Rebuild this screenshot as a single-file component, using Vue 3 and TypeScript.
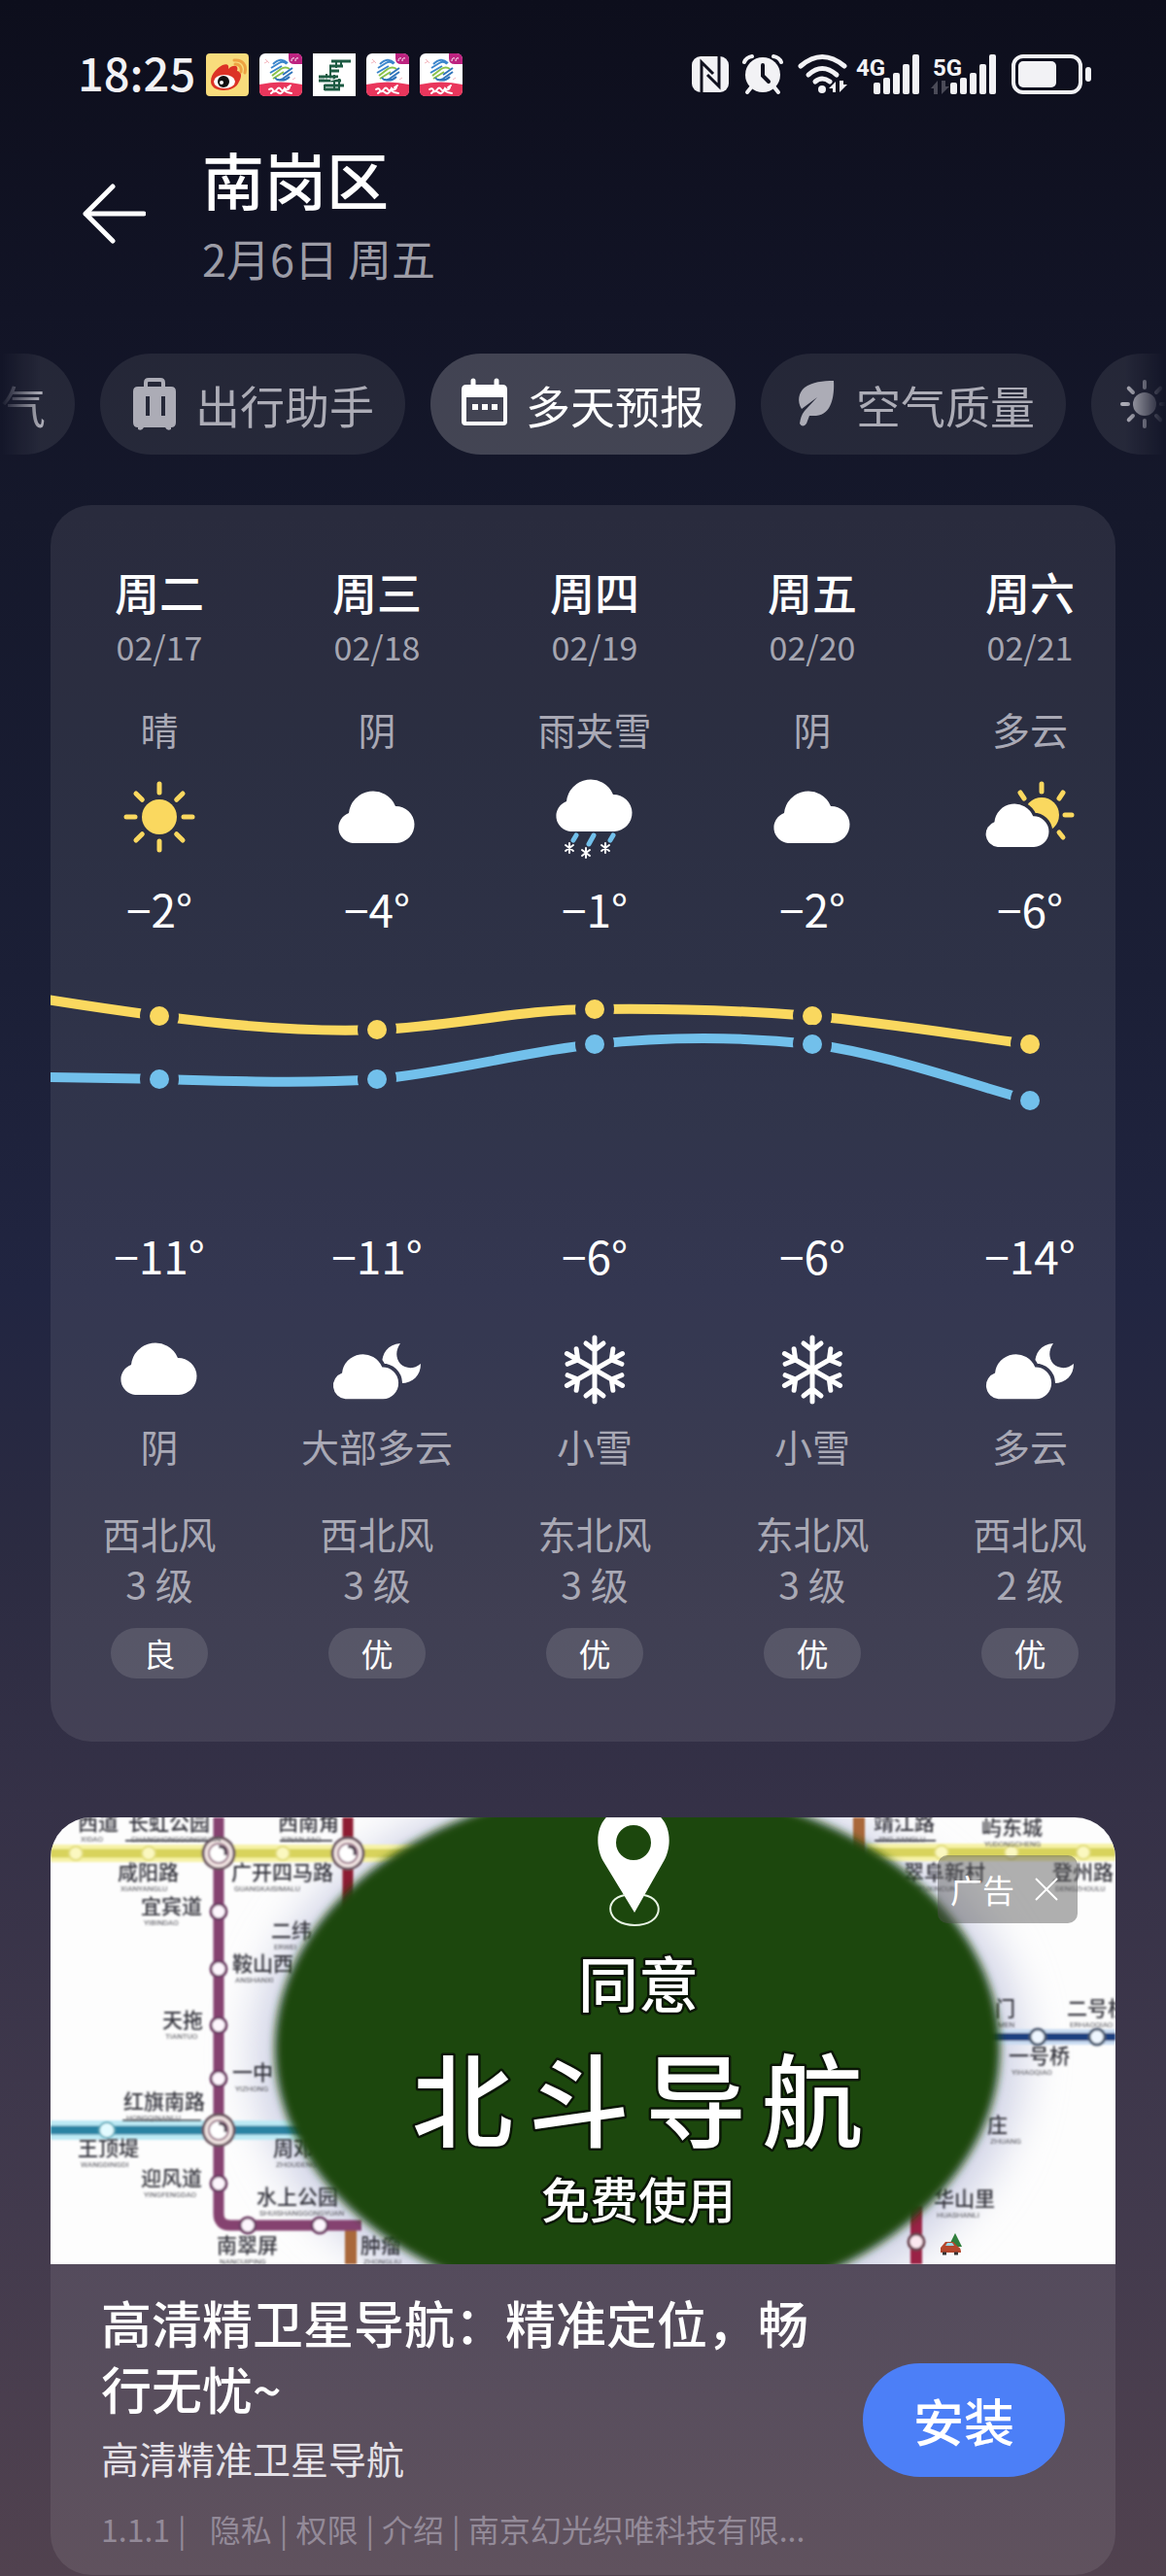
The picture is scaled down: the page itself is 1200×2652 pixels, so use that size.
<script setup lang="ts">
type Weather = 'sun' | 'cloud' | 'sleet' | 'partly' | 'night' | 'snow'

interface Day {
  week: string
  date: string
  day: string
  dayIcon: Weather
  high: string
  low: string
  nightIcon: Weather
  night: string
  wind: string
  level: string
  air: string
}

const days: Day[] = [
  { week: '周二', date: '02/17', day: '晴', dayIcon: 'sun', high: '−2°', low: '−11°', nightIcon: 'cloud', night: '阴', wind: '西北风', level: '3 级', air: '良' },
  { week: '周三', date: '02/18', day: '阴', dayIcon: 'cloud', high: '−4°', low: '−11°', nightIcon: 'night', night: '大部多云', wind: '西北风', level: '3 级', air: '优' },
  { week: '周四', date: '02/19', day: '雨夹雪', dayIcon: 'sleet', high: '−1°', low: '−6°', nightIcon: 'snow', night: '小雪', wind: '东北风', level: '3 级', air: '优' },
  { week: '周五', date: '02/20', day: '阴', dayIcon: 'cloud', high: '−2°', low: '−6°', nightIcon: 'snow', night: '小雪', wind: '东北风', level: '3 级', air: '优' },
  { week: '周六', date: '02/21', day: '多云', dayIcon: 'partly', high: '−6°', low: '−14°', nightIcon: 'night', night: '多云', wind: '西北风', level: '2 级', air: '优' },
]

// Chart points: one per day column, 224 apart
const highs = [81, 95, 74, 81, 110].map((y, i) => ({ x: 112 + i * 224, y }))
const lows = [146, 146, 110, 110, 168].map((y, i) => ({ x: 112 + i * 224, y }))

const cloud = 'M25 77A16 16 0 0 1 21 46A25 25 0 0 1 69 39A19 19 0 0 1 70 77Z'
const octants = [0, 45, 90, 135, 180, 225, 270, 315]
const sextants = [0, 60, 120, 180, 240, 300]

// Metro map behind the advertisement: label, pinyin, left x, centre y
const stations: [string, string, number, number][] = [
  ['西道', 'XIDAO', 28, 6], ['长虹公园', 'CHANGHONGGONGYUAN', 80, 6], ['西南角', 'XINANJIAO', 234, 6],
  ['咸阳路', 'XIANYANGLU', 69, 57], ['广开四马路', 'GUANGKAISIMALU', 186, 57], ['宜宾道', 'YIBINDAO', 93, 92],
  ['二纬', 'ERWEI', 227, 117], ['鞍山西', 'ANSHANXI', 187, 151], ['天拖', 'TIANTUO', 115, 209],
  ['一中', 'YIZHONG', 187, 263], ['红旗南路', 'HONGQINANLU', 75, 293], ['王顶堤', 'WANGDINGDI', 28, 341],
  ['周邓', 'ZHOUDENG', 229, 341], ['迎风道', 'YINGFENGDAO', 93, 372], ['水上公园', 'SHUISHANGGONGYUAN', 212, 391],
  ['南翠屏', 'NANCUIPING', 171, 441], ['肿瘤', 'ZHONGLIU', 319, 441], ['靖江路', 'JINGJIANGLU', 847, 6],
  ['屿东城', 'YUDONGCHENG', 958, 11], ['翠阜新村', 'CUIFUXINCUN', 878, 57], ['登州路', 'DENGZHOULU', 1031, 57],
  ['门', 'MEN', 972, 197], ['二号桥', 'ERHAOQIAO', 1046, 197], ['一号桥', 'YIHAOQIAO', 986, 246],
  ['庄', 'ZHUANG', 964, 317], ['华山里', 'HUASHANLI', 909, 393],
]
const purpleStops = [[173, 97], [173, 156], [173, 214], [173, 269], [173, 377], [203, 420], [277, 420]]
const yellowStops = [[26, 37], [101, 37], [239, 37], [917, 36], [989, 36], [1063, 36]]
const interchanges = [[173, 37], [306, 37], [173, 322]]
const signals = ['4G', '5G']
const apps = ['weibo', 'mobile', 'post', 'mobile', 'mobile']
</script>

<template>
  <main class="screen">
    <div class="status">
      <div class="status-left">
        <time class="clock">18:25</time>
        <svg v-for="(app, i) in apps" :key="i" class="app" viewBox="0 0 44 44" aria-hidden="true">
          <template v-if="app === 'weibo'">
            <rect width="44" height="44" rx="4" fill="#f8dc7c" />
            <path d="M5 29C5 20 13 14 17 12c5-2 7 0 6 4 5-5 11-4 9 2 5 1 5 6 2 11-2 6-9 9-16 9C10 38 5 34 5 29z" fill="#dc3226" />
            <ellipse cx="19" cy="29" rx="11" ry="7" fill="#fff" />
            <circle cx="18" cy="29" r="6" fill="#111" />
            <circle cx="16" cy="30" r="2" fill="#fff" />
            <path d="M30 11c5 0 7 4 6 8M29 7c9-1 13 6 11 13" fill="none" stroke="#eea343" stroke-width="3" stroke-linecap="round" />
          </template>
          <template v-else-if="app === 'mobile'">
            <rect width="44" height="44" rx="6" fill="#fff" />
            <path d="M30 0h8q6 0 6 6v5H36q-6 0-6-6z" fill="#bd2380" />
            <path d="M0 32q22-5 44 0v6q0 6-6 6H6q-6 0-6-6z" fill="#e9365c" />
            <path d="M14 11q8-8 15-1M12 15l8-5q5-3 8 1M11 20l12-7" fill="none" stroke="#3b86cc" stroke-width="2" />
            <path d="M13 23l9-7q5-3 9 0M14 26l11-7" fill="none" stroke="#8bc34a" stroke-width="2" />
            <path d="M34 15l-10 7M34 19l-10 7q-5 3-8-1M31 24q-5 5-12 3" fill="none" stroke="#2e74ba" stroke-width="2" />
            <path d="M10 37q3-2 4 1t4-1q2-3 4 0t4-1q3 3 5-1M12 41q4-4 7-1t6-2q4 3 8 3M29 35l3-2" fill="none" stroke="#fff" stroke-width="2" stroke-linecap="round" />
            <path d="M33 8q0-4 3-3M37 8q0-4 3-3" fill="none" stroke="#fff" stroke-width="1" />
            <path d="M5 10l4-2M6 6l4 4M34 27l3-2" stroke="#f4b7bf" stroke-width="1" />
          </template>
          <template v-else>
            <rect width="44" height="44" fill="#fff" />
            <path d="M19 8h20M17 13h14M17 18h10M6 24h20M6 28h23M12 33h20M12 37h16" stroke="#1d5b43" stroke-width="3" />
            <path d="M18 12v14M24 7v8M12 32v6M14 21v8M22 22v14M27 26v11M29 14v-5" stroke="#1d5b43" stroke-width="2" />
            <path d="M12 26h8M18 28l10-3" stroke="#fff" stroke-width="1" />
          </template>
        </svg>
      </div>
      <div class="status-right">
        <svg width="38" height="44" viewBox="0 0 38 44" aria-hidden="true">
          <rect y="3" width="38" height="37" rx="9" fill="#f2f2f5" />
          <path d="M10 41V9L22 21" fill="none" stroke="#10111f" stroke-width="3" />
          <path d="M28 2V34L16 22" fill="none" stroke="#10111f" stroke-width="3" />
        </svg>
        <svg class="alarm" width="42" height="44" viewBox="0 0 42 44" aria-hidden="true">
          <g fill="none" stroke="#f2f2f5" stroke-linecap="round">
            <path d="M2 9q2-5 8-6M40 9q-2-5-8-6" stroke-width="4" />
            <path d="M9 35l-4 5M33 35l4 5" stroke-width="4" />
          </g>
          <circle cx="21" cy="22" r="18" fill="#f2f2f5" />
          <path d="M21 12v11l6 6" fill="none" stroke="#10111f" stroke-width="4" stroke-linecap="round" />
        </svg>
        <svg class="wifi" width="54" height="44" viewBox="0 0 54 44" aria-hidden="true">
          <g fill="none" stroke="#f2f2f5" stroke-width="5" stroke-linecap="round">
            <path d="M4 13Q26-6 49 13" />
            <path d="M12 22Q26 9 41 22" />
            <path d="M19 29Q26 23 34 29" />
          </g>
          <circle cx="26" cy="37" r="4" fill="#f2f2f5" />
          <path d="M40 40V29l-7 7h4v4zM44 28v12l8-8h-4v-4z" fill="#f2f2f5" />
        </svg>
        <svg v-for="name in signals" :key="name" class="signal" width="68" height="44" viewBox="0 0 68 44">
          <text x="2" y="23" class="net">{{ name }}</text>
          <g fill="#f2f2f5">
            <rect x="20" y="30" width="7" height="12" rx="2" />
            <rect x="30" y="25" width="7" height="17" rx="2" />
            <rect x="40" y="20" width="7" height="22" rx="2" />
            <rect x="50" y="11" width="7" height="31" rx="2" />
            <rect x="60" y="1" width="7" height="41" rx="2" />
          </g>
          <path v-if="name === '5G'" d="M7 42V28l-7 8h3v6zM11 28v14l8-8h-4v-6z" fill="#4a4a57" />
        </svg>
        <svg class="battery" width="84" height="44" viewBox="0 0 84 44" aria-hidden="true">
          <rect x="3" y="3" width="69" height="37" rx="10" fill="none" stroke="#f2f2f5" stroke-width="4" />
          <rect x="8" y="8" width="39" height="27" rx="5" fill="#f2f2f5" />
          <rect x="77" y="14" width="6" height="15" rx="3" fill="#f2f2f5" />
        </svg>
      </div>
    </div>

    <header class="header">
      <button class="back" type="button" aria-label="返回">
        <svg width="66" height="64" viewBox="0 0 66 64" aria-hidden="true">
          <path d="M32 4L4 32l28 28M4 32h60" fill="none" stroke="#fff" stroke-width="5" stroke-linecap="round" stroke-linejoin="round" />
        </svg>
      </button>
      <div>
        <h1>南岗区</h1>
        <p class="today">2月6日 周五</p>
      </div>
    </header>

    <nav class="tabs">
      <button class="tab tail" type="button">气</button>
      <button class="tab" type="button">
        <svg viewBox="0 0 50 54" aria-hidden="true">
          <path d="M17 10V5q0-3 3-3h12q3 0 3 3v5" fill="none" stroke="currentColor" stroke-width="4" />
          <path fill-rule="evenodd" fill="currentColor" d="M9 9h34q5 0 5 5v32q0 5-5 5v2q-4 2-6-2H15q-2 4-6 2v-2q-5 0-5-5V14q0-5 5-5zM17 19v20h4V19zM33 19v20h4V19z" />
        </svg>
        <span>出行助手</span>
      </button>
      <button class="tab active" type="button">
        <svg viewBox="0 0 50 54" aria-hidden="true">
          <path d="M14 3v7M38 3v7" stroke="currentColor" stroke-width="5" stroke-linecap="round" />
          <path fill-rule="evenodd" fill="currentColor" d="M7 7h37q5 0 5 5v33q0 4-4 4H6q-4 0-4-4V12q0-5 5-5zM7 20v25h38V20z" />
          <path d="M13 27h6v6h-6zM23 27h6v6h-6zM33 27h6v6h-6z" fill="currentColor" />
        </svg>
        <span>多天预报</span>
      </button>
      <button class="tab" type="button">
        <svg viewBox="0 0 50 54" aria-hidden="true">
          <path d="M45 3C46 18 43 38 27 39H20L17 47Q13 52 10 47Q11 39 15 34L28 20 12 32C7 24 9 15 15 10 23 4 34 3 45 3z" fill="currentColor" />
        </svg>
        <span>空气质量</span>
      </button>
      <button class="tab" type="button" aria-label="日出">
        <svg viewBox="0 0 50 54" aria-hidden="true">
          <circle cx="25" cy="27" r="12" fill="currentColor" />
          <path v-for="a in octants" :key="a" d="M25 4v6" :transform="`rotate(${a} 25 27)`" stroke="currentColor" stroke-width="4" stroke-linecap="round" />
        </svg>
      </button>
    </nav>

    <section class="card forecast">
      <svg class="defs" width="0" height="0" aria-hidden="true">
        <defs>
          <mask id="behind-day" maskUnits="userSpaceOnUse" x="0" y="0" width="100" height="100">
            <rect width="100" height="100" fill="#fff" />
            <path :d="cloud" transform="translate(-4 17) scale(0.83)" stroke="#000" stroke-width="9" />
          </mask>
          <mask id="behind-night" maskUnits="userSpaceOnUse" x="0" y="0" width="100" height="100">
            <rect width="100" height="100" fill="#fff" />
            <path :d="cloud" transform="translate(-4 15) scale(0.86)" stroke="#000" stroke-width="9" />
          </mask>
          <symbol id="w-sun" viewBox="0 0 100 100">
            <circle cx="50" cy="50" r="18" fill="#fad85f" />
            <path v-for="a in octants" :key="a" d="M50 16v9" :transform="`rotate(${a} 50 50)`" stroke="#fad85f" stroke-width="5" stroke-linecap="round" />
          </symbol>
          <symbol id="w-cloud" viewBox="0 0 100 100"><path :d="cloud" fill="#fff" /></symbol>
          <symbol id="w-sleet" viewBox="0 0 100 100">
            <path :d="cloud" transform="translate(0 -12)" fill="#fff" />
            <path d="M31 69l-3 5M49 69l-5 9M69 69l-3 5" stroke="#72c0eb" stroke-width="5" stroke-linecap="round" />
            <path d="M24 77v10M20 79l8 6M28 79l-8 6M41 82v10M37 84l8 6M45 84l-8 6M61 77v10M57 79l8 6M65 79l-8 6" stroke="#fff" stroke-width="2" stroke-linecap="round" />
          </symbol>
          <symbol id="w-partly" viewBox="0 0 100 100">
            <circle cx="62" cy="48" r="18" fill="#fad85f" mask="url(#behind-day)" />
            <path d="M62 16v8M84 25l-4 6M40 25l4 6M86 48h7M80 66l4 5" stroke="#fad85f" stroke-width="5" stroke-linecap="round" />
            <path :d="cloud" transform="translate(-4 17) scale(0.83)" fill="#fff" />
          </symbol>
          <symbol id="w-night" viewBox="0 0 100 100">
            <path d="M74 24C61 25 55 34 55 46C55 57 64 65 75 65C87 65 95 57 95 45C88 51 79 50 74 45C69 39 69 31 74 24Z" fill="#fff" mask="url(#behind-night)" />
            <path :d="cloud" transform="translate(-4 15) scale(0.86)" fill="#fff" />
          </symbol>
          <symbol id="w-snow" viewBox="0 0 100 100">
            <path v-for="a in sextants" :key="a" d="M50 51V18M41 24l9 7 9-7" :transform="`rotate(${a} 50 51)`" fill="none" stroke="#fff" stroke-width="5" stroke-linecap="round" />
          </symbol>
        </defs>
      </svg>

      <div class="days">
        <div v-for="d in days" :key="d.date" class="day">
          <h2>{{ d.week }}</h2>
          <span class="date">{{ d.date }}</span>
          <span class="sky">{{ d.day }}</span>
          <svg class="weather" aria-hidden="true"><use :href="`#w-${d.dayIcon}`" /></svg>
          <span class="temp">{{ d.high }}</span>
        </div>
      </div>

      <svg class="chart" width="1120" height="297" viewBox="0 0 1120 297" aria-hidden="true">
        <defs>
          <mask id="halos" maskUnits="userSpaceOnUse" x="0" y="0" width="1120" height="297">
            <rect width="1120" height="297" fill="#fff" />
            <circle v-for="p in [...highs, ...lows]" :key="`${p.x}-${p.y}`" :cx="p.x" :cy="p.y" r="20" fill="#000" />
          </mask>
          <mask id="low-halos" maskUnits="userSpaceOnUse" x="0" y="0" width="1120" height="297">
            <rect width="1120" height="297" fill="#fff" />
            <circle v-for="p in lows" :key="p.x" :cx="p.x" :cy="p.y" r="20" fill="#000" />
          </mask>
        </defs>
        <g fill="none" stroke-width="10" mask="url(#halos)">
          <path d="M-4 64C40 71 75 76 112 81C187 91 261 98 336 95C411 92 485 74 560 74C635 73 709 75 784 81C859 88 933 100 1008 110" stroke="#fad85f" />
          <path d="M-4 144C40 145 75 145 112 146C187 148 261 151 336 146C411 139 485 118 560 110C635 102 709 102 784 110C859 120 933 147 1008 168" stroke="#72c0eb" />
        </g>
        <g fill="#fad85f" mask="url(#low-halos)">
          <circle v-for="p in highs" :key="p.x" :cx="p.x" :cy="p.y" r="10" />
        </g>
        <circle v-for="p in lows" :key="p.x" :cx="p.x" :cy="p.y" r="10" fill="#72c0eb" />
      </svg>

      <div class="days">
        <div v-for="d in days" :key="d.date" class="day night">
          <span class="temp">{{ d.low }}</span>
          <svg class="weather" aria-hidden="true"><use :href="`#w-${d.nightIcon}`" /></svg>
          <span class="sky">{{ d.night }}</span>
          <span class="wind">{{ d.wind }}</span>
          <span class="level">{{ d.level }}</span>
          <span class="air">{{ d.air }}</span>
        </div>
      </div>
    </section>

    <article class="card ad">
      <div class="banner">
        <svg class="map" viewBox="0 0 1096 460" preserveAspectRatio="xMidYMid slice">
          <defs>
            <filter id="soft"><feGaussianBlur stdDeviation="1" /></filter>
            <filter id="edge" x="-20%" y="-20%" width="140%" height="140%"><feGaussianBlur stdDeviation="4" /></filter>
            <filter id="shade" x="-20%" y="-20%" width="140%" height="140%"><feGaussianBlur stdDeviation="22" /></filter>
          </defs>
          <rect width="1096" height="460" fill="#fdfdfd" />
          <ellipse cx="605" cy="245" rx="396" ry="290" fill="#d0d3e6" filter="url(#shade)" />
          <g filter="url(#soft)" fill="none">
            <path d="M0 37H400M840 36H1096" stroke="#f7f3a8" stroke-width="18" />
            <path d="M0 37H400M840 36H1096" stroke="#d8d35c" stroke-width="9" />
            <path d="M0 322H290" stroke="#bdeaf5" stroke-width="20" />
            <path d="M0 322H290" stroke="#2b83a3" stroke-width="9" />
            <path d="M960 226H1096" stroke="#c9dcf2" stroke-width="16" />
            <path d="M960 226H1096" stroke="#1d4180" stroke-width="8" />
            <path d="M306 0V100" stroke="#8d1f31" stroke-width="11" />
            <path d="M832 0V40M309 415V460" stroke="#a9683a" stroke-width="12" />
            <path d="M891 400V460" stroke="#9a2444" stroke-width="12" />
            <path d="M173 0V408Q173 420 185 420H320" stroke="#854270" stroke-width="11" />
            <circle v-for="[x, y] in yellowStops" :key="x" :cx="x" :cy="y" r="7" fill="#fbf8c0" stroke="#e2dd7c" stroke-width="2" />
            <circle v-for="[x, y] in purpleStops" :key="`${x}-${y}`" :cx="x" :cy="y" r="8" fill="#fdf5fd" stroke="#6f3f66" stroke-width="3" />
            <circle cx="58" cy="322" r="8" fill="#e4fbff" stroke="#5ea8b8" stroke-width="2" />
            <circle cx="1016" cy="226" r="8" fill="#eef6ff" stroke="#4c5a70" stroke-width="3" />
            <circle cx="1077" cy="226" r="8" fill="#eef6ff" stroke="#4c5a70" stroke-width="3" />
            <circle cx="891" cy="437" r="8" fill="#fbe8ef" stroke="#6b4350" stroke-width="3" />
            <g v-for="[x, y] in interchanges" :key="`${x}-${y}`">
              <circle :cx="x" :cy="y" r="16" fill="#f3e6e4" stroke="#6a5560" stroke-width="3" />
              <circle :cx="x" :cy="y" r="10" fill="#fff" stroke="#a07f90" stroke-width="2" />
              <path :d="`M${x} ${y - 7}q9 0 7 9`" stroke="#4b3a4c" stroke-width="3" />
            </g>
            <path d="M77 24H162M236 24H290M74 312H155M848 24H911" stroke="#55555c" stroke-width="2" />
          </g>
          <g filter="url(#soft)">
            <g v-for="[label, pinyin, x, y] in stations" :key="label">
              <text class="stop" :x="x" :y="y + 7">{{ label }}</text>
              <text class="pinyin" :x="x + 3" :y="y + 19">{{ pinyin }}</text>
            </g>
          </g>
          <ellipse cx="604" cy="238" rx="373" ry="270" fill="#1e4610" filter="url(#edge)" />
          <path fill-rule="evenodd" fill="#fff" d="M601 98L570 47C560 31 562 11 571 1C584-14 616-14 629 1C638 11 640 31 630 47ZM600 8A18 18 0 1 0 600 44A18 18 0 1 0 600 8Z" />
          <path d="M591 80C568 84 572 111 601 111C631 111 633 84 611 80" fill="none" stroke="#e8f5e4" stroke-width="2" />
          <g class="slogan">
            <text x="605" y="196" text-anchor="middle" font-size="62">同意</text>
            <text x="372 492 612 732" y="332" font-size="104">北斗导航</text>
            <text x="605" y="413" text-anchor="middle" font-size="50">免费使用</text>
          </g>
          <path d="M931 428l7 14h-14z" fill="#2f7d3c" />
          <path d="M916 443l5-6h8l5 5q3 1 3 6h-21z" fill="#b4472e" />
          <path d="M921 441l2-3h5l2 3z" fill="#9ad8e6" />
          <path d="M918 449h4M930 449h4" stroke="#343434" stroke-width="3" />
        </svg>
        <div class="tag">
          <span>广告</span>
          <button type="button" aria-label="关闭">
            <svg width="24" height="24" viewBox="0 0 24 24" aria-hidden="true"><path d="M1 1l22 22M23 1L1 23" stroke="#fff" stroke-width="2" /></svg>
          </button>
        </div>
      </div>
      <div class="info">
        <div class="copy">
          <h3>高清精卫星导航：精准定位，畅行无忧~</h3>
          <p class="summary">高清精准卫星导航</p>
          <p class="meta">
            <span>1.1.1</span><span class="first">|</span><a href="#">隐私</a><span>|</span><a href="#">权限</a><span>|</span><a href="#">介绍</a><span>|</span><span>南京幻光织唯科技有限...</span>
          </p>
        </div>
        <button class="install" type="button">安装</button>
      </div>
    </article>
  </main>
</template>

<style>
body {
  margin: 0;
  background: #53434f;
}
</style>

<style scoped>
.screen {
  box-sizing: border-box;
  overflow: hidden;
  padding: 55px 0 1px;
  color: #fff;
  font-family: "Noto Sans CJK SC", "Noto Sans", sans-serif;
  background: linear-gradient(#0d0e1c 0%, #121426 12%, #15182b 20%, #1b1f36 38%, #212541 50%, #2b2b41 60%, #353147 70%, #423a4d 86%, #51424f 100%);
}
h1, h2, h3, p {
  margin: 0;
  font-weight: 500;
}
button {
  padding: 0;
  border: 0;
  background: none;
  color: inherit;
  font: inherit;
}
svg {
  display: block;
  flex: none;
}
.status {
  display: flex;
  justify-content: space-between;
  height: 44px;
  padding: 0 76px 0 80px;
}
.status-left, .status-right {
  display: flex;
  align-items: flex-start;
}
.status-left {
  gap: 11px;
}
.clock {
  color: #f2f2f5;
  font-size: 47px;
  font-weight: 500;
  line-height: 38px;
}
.app {
  width: 44px;
  height: 44px;
}
.alarm, .battery, .wifi {
  margin-left: 14px;
}
.signal {
  margin-left: 5px;
}
.signal + .signal {
  margin-left: 11px;
}
.net {
  fill: #f2f2f5;
  font-family: Roboto, "Noto Sans", sans-serif;
  font-size: 24px;
  font-weight: 700;
}
.header {
  display: flex;
  align-items: center;
  gap: 58px;
  margin-top: 44px;
  padding: 0 84px;
}
h1 {
  font-size: 64px;
  line-height: 80px;
}
.today {
  margin-top: 13px;
  color: #9c9ca6;
  font-size: 45px;
  font-weight: 400;
  line-height: 60px;
}
.tabs {
  display: flex;
  justify-content: center;
  gap: 26px;
  margin-top: 68px;
  overflow: hidden;
  mask-image: linear-gradient(90deg, transparent, #000 42px, #000 calc(100% - 42px), transparent);
}
.tab {
  box-sizing: border-box;
  display: flex;
  flex: none;
  align-items: center;
  gap: 18px;
  width: 314px;
  height: 104px;
  padding: 0 30px;
  border-radius: 52px;
  background: rgba(255, 255, 255, 0.08);
  color: #acacb6;
  font-size: 46px;
  white-space: nowrap;
}
.tab svg {
  width: 50px;
  height: 54px;
}
.tab.tail {
  justify-content: flex-end;
}
.tab.active {
  background: rgba(255, 255, 255, 0.2);
  color: #fff;
}
.card {
  margin: 52px 52px 0;
  overflow: hidden;
  border-radius: 42px;
  background: rgba(255, 255, 255, 0.085);
}
.forecast {
  padding: 58px 0 65px;
}
.defs {
  position: absolute;
}
.days {
  display: flex;
}
.day {
  display: flex;
  flex: 0 0 224px;
  flex-direction: column;
  align-items: center;
  white-space: nowrap;
}
h2 {
  font-size: 46px;
  line-height: 60px;
}
.date {
  margin-top: 6px;
  color: #a5a6b1;
  font-size: 34px;
  line-height: 44px;
}
.sky, .wind, .level {
  color: #a9a9b5;
  font-size: 39px;
  line-height: 50px;
}
.sky {
  margin-top: 37px;
}
.weather {
  width: 100px;
  height: 100px;
  margin-top: 16px;
}
.temp {
  margin-top: 14px;
  font-size: 46px;
  line-height: 60px;
}
.night .temp {
  margin-top: 0;
}
.night .weather {
  margin-top: 37px;
}
.night .sky {
  margin-top: 4px;
}
.wind, .level {
  line-height: 52px;
}
.wind {
  margin-top: 39px;
}
.air {
  width: 100px;
  margin-top: 20px;
  border-radius: 26px;
  background: rgba(255, 255, 255, 0.12);
  font-size: 33px;
  line-height: 52px;
  text-align: center;
}
.ad {
  margin-top: 78px;
}
.banner {
  position: relative;
}
.map {
  width: 100%;
  height: 460px;
}
.stop {
  fill: #34343c;
  font-size: 21px;
  font-weight: 500;
}
.pinyin {
  fill: #55555c;
  font-family: Roboto, sans-serif;
  font-size: 8px;
}
.slogan {
  fill: #fff;
  stroke: #0a1606;
  stroke-width: 5px;
  paint-order: stroke;
  stroke-linejoin: round;
  font-weight: 500;
}
.tag {
  position: absolute;
  top: 39px;
  right: 39px;
  display: flex;
  align-items: center;
  justify-content: space-between;
  box-sizing: border-box;
  width: 144px;
  height: 70px;
  padding: 0 20px 0 13px;
  border-radius: 10px;
  background: rgba(80, 80, 80, 0.45);
  font-size: 33px;
}
.info {
  display: flex;
  align-items: center;
  justify-content: space-between;
  padding: 26px 52px;
}
.copy {
  width: 730px;
}
h3 {
  font-size: 52px;
  line-height: 68px;
}
.summary {
  margin-top: 12px;
  color: #e4e1e7;
  font-size: 39px;
  font-weight: 400;
  line-height: 50px;
}
.meta {
  display: flex;
  gap: 8px;
  margin-top: 26px;
  color: #938a98;
  font-size: 32px;
  font-weight: 400;
  line-height: 44px;
  white-space: nowrap;
}
.meta a {
  color: inherit;
  text-decoration: none;
}
.first {
  margin-right: 16px;
}
.install {
  width: 208px;
  height: 117px;
  border-radius: 59px;
  background: #4c7ff7;
  font-size: 52px;
  font-weight: 500;
}
</style>
